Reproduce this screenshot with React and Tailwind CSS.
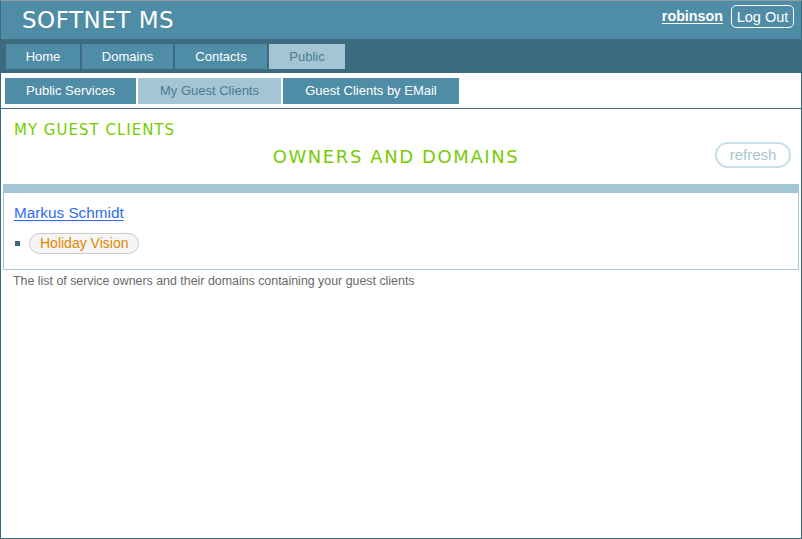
import React from "react";

const navTabs = [
  { label: "Home", w: "w-[74px]" },
  { label: "Domains", w: "w-[91px]" },
  { label: "Contacts", w: "w-[92px]" },
  { label: "Public", w: "w-[76px]", active: true },
];

const subTabs = [
  { label: "Public Services", w: "w-[131px]" },
  { label: "My Guest Clients", w: "w-[143px]", active: true },
  { label: "Guest Clients by EMail", w: "w-[176px]" },
];

export default function App() {
  return (
    <div className="w-[802px] h-[539px] border border-[#3b6a7e] border-t-[#8f9ea5] bg-white flex flex-col font-['Liberation_Sans',Arial,sans-serif]">
      {/* Header */}
      <div className="h-[38px] bg-[#4f8ca6] flex justify-between items-start">
        <div className="pl-[21px] pt-[6px] text-white text-[23px] leading-[26px] font-['DejaVu_Sans',Verdana,sans-serif] tracking-[0.5px]">
          SOFTNET MS
        </div>
        <div className="flex items-center gap-[8px] pr-[7px] pt-[4px]">
          <a href="#" className="text-white font-bold text-[14.3px] underline underline-offset-2">
            robinson
          </a>
          <button className="h-[23px] w-[63px] border border-white rounded-[5px] text-white text-[14.5px] leading-[20px]">
            Log Out
          </button>
        </div>
      </div>

      {/* Main nav */}
      <div className="h-[34px] bg-[#3c6a7e] flex gap-[2px] pl-[5px] pt-[5px]">
        {navTabs.map((t) => (
          <div
            key={t.label}
            className={
              "h-[25px] flex items-center justify-center text-[13px] " +
              t.w +
              " " +
              (t.active ? "bg-[#a3c5d4] text-[#4d7c92]" : "bg-[#4f8ca6] text-white")
            }
          >
            {t.label}
          </div>
        ))}
      </div>

      {/* Sub nav */}
      <div className="h-[36px] border-b border-[#3c6a7e] flex gap-[2px] pl-[4px] pt-[5px]">
        {subTabs.map((t) => (
          <div
            key={t.label}
            className={
              "h-[26px] flex items-center justify-center text-[13px] " +
              t.w +
              " " +
              (t.active ? "bg-[#a3c5d4] text-[#4d7c92]" : "bg-[#4f8ca6] text-white")
            }
          >
            {t.label}
          </div>
        ))}
      </div>

      {/* Content */}
      <div className="flex flex-col">
        <div className="pl-[13px] pt-[12px] text-[15px] leading-[18px] tracking-[1px] text-[#77cc00] font-['DejaVu_Sans',Verdana,sans-serif]">
          MY GUEST CLIENTS
        </div>
        <div className="mt-[3px] grid grid-cols-[1fr_auto_1fr] items-center h-[26px] pr-[10px]">
          <div />
          <div className="mt-[4px] text-[18px] leading-[20px] tracking-[1.6px] text-[#77cc00] font-['DejaVu_Sans',Verdana,sans-serif]">
            OWNERS AND DOMAINS
          </div>
          <div className="flex justify-end">
            <button className="h-[26px] w-[76px] rounded-full border-2 border-[#c6dfe9] text-[#a9c6d3] text-[15px] leading-[20px]">
              refresh
            </button>
          </div>
        </div>

        <div className="mt-[16px] mx-[2px] border border-[#a2c6d5] border-t-[9px] pl-[10px] pt-[11px] pb-[15px]">
          <a href="#" className="block w-fit text-[15.3px] leading-[18px] text-[#2f6cf0] underline underline-offset-2">
            Markus Schmidt
          </a>
          <div className="mt-[11px] flex items-center">
            <span className="ml-[1px] w-[5px] h-[5px] bg-[#3c6a7e]" />
            <span className="ml-[9px] h-[21px] px-[10px] flex items-center rounded-full border border-[#c9c9c9] bg-[#f5f5f5] text-[14px] text-[#e08700]">
              Holiday Vision
            </span>
          </div>
        </div>

        <div className="pl-[12px] pt-[3px] text-[12.4px] leading-[16px] text-[#6a6a6a]">
          The list of service owners and their domains containing your guest clients
        </div>
      </div>
    </div>
  );
}
